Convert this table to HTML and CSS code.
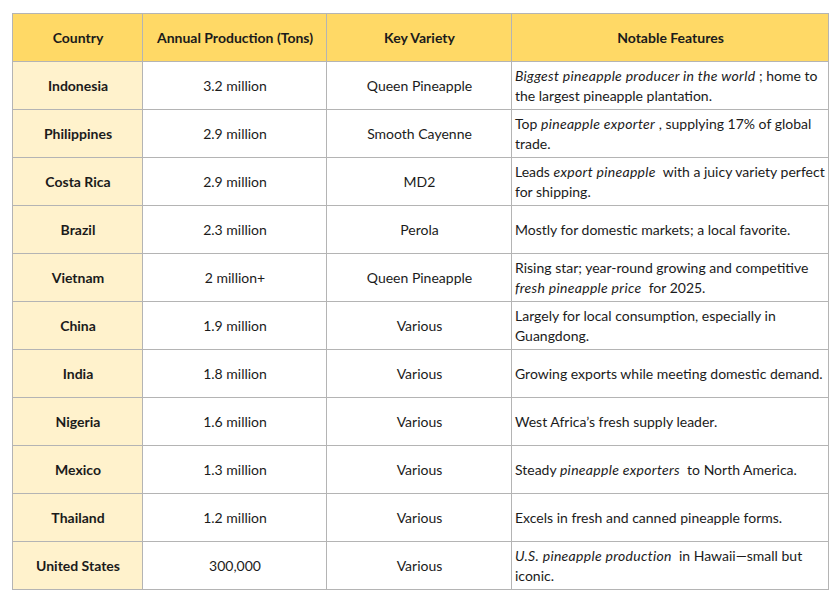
FILE: index.html
```html
<!DOCTYPE html>
<html>
<head>
<meta charset="utf-8">
<link rel="stylesheet" href="styles.css">
</head>
<body>
<table class="tbl">
  <colgroup>
    <col class="c1"><col class="c2"><col class="c3"><col class="c4">
  </colgroup>
  <thead>
    <tr><th>Country</th><th>Annual Production (Tons)</th><th>Key Variety</th><th>Notable Features</th></tr>
  </thead>
  <tbody>
    <tr><td class="country">Indonesia</td><td class="mid">3.2 million</td><td class="mid">Queen Pineapple</td><td class="feat"><em>Biggest pineapple producer in the world</em> ; home to the largest pineapple plantation.</td></tr>
    <tr><td class="country">Philippines</td><td class="mid">2.9 million</td><td class="mid">Smooth Cayenne</td><td class="feat">Top <em>pineapple exporter</em> , supplying 17% of global trade.</td></tr>
    <tr><td class="country">Costa Rica</td><td class="mid">2.9 million</td><td class="mid">MD2</td><td class="feat">Leads <em>export pineapple</em>&nbsp; with a juicy variety perfect for shipping.</td></tr>
    <tr><td class="country">Brazil</td><td class="mid">2.3 million</td><td class="mid">Perola</td><td class="feat">Mostly for domestic markets; a local favorite.</td></tr>
    <tr><td class="country">Vietnam</td><td class="mid">2 million+</td><td class="mid">Queen Pineapple</td><td class="feat">Rising star; year-round growing and competitive <em>fresh pineapple price</em>&nbsp; for 2025.</td></tr>
    <tr><td class="country">China</td><td class="mid">1.9 million</td><td class="mid">Various</td><td class="feat">Largely for local consumption, especially in Guangdong.</td></tr>
    <tr><td class="country">India</td><td class="mid">1.8 million</td><td class="mid">Various</td><td class="feat">Growing exports while meeting domestic demand.</td></tr>
    <tr><td class="country">Nigeria</td><td class="mid">1.6 million</td><td class="mid">Various</td><td class="feat">West Africa’s fresh supply leader.</td></tr>
    <tr><td class="country">Mexico</td><td class="mid">1.3 million</td><td class="mid">Various</td><td class="feat">Steady <em>pineapple exporters</em>&nbsp; to North America.</td></tr>
    <tr><td class="country">Thailand</td><td class="mid">1.2 million</td><td class="mid">Various</td><td class="feat">Excels in fresh and canned pineapple forms.</td></tr>
    <tr><td class="country">United States</td><td class="mid">300,000</td><td class="mid">Various</td><td class="feat"><em>U.S. pineapple production</em>&nbsp; in Hawaii—small but iconic.</td></tr>
  </tbody>
</table>
</body>
</html>
```
FILE: styles.css
```css
html, body {
  margin: 0;
  background: #ffffff;
}
body {
  padding: 13px 0 0 12px;
  font-family: Lato, "Open Sans", sans-serif;
  font-size: 14px;
  color: #1b1b1b;
}
.tbl {
  border-collapse: collapse;
  table-layout: fixed;
  width: 816px;
}
.c1 { width: 130px; }
.c2 { width: 184px; }
.c3 { width: 185px; }
.c4 { width: 317px; }
.tbl th, .tbl td {
  border: 1px solid #b4b4b4;
  height: 48px;
  padding: 0 2px 0 3px;
  line-height: 20px;
  vertical-align: middle;
  box-sizing: border-box;
}
.tbl th {
  background: #ffd966;
  font-weight: 700;
  text-align: center;
}
.country {
  background: #fff2cc;
  font-weight: 700;
  text-align: center;
}
.mid {
  text-align: center;
}
.feat {
  text-align: left;
}
.feat em {
  font-style: italic;
  letter-spacing: 0.3px;
}
```
